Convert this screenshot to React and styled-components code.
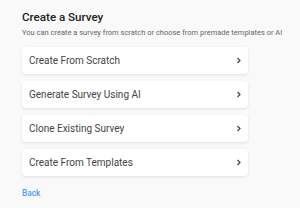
import React from "react";
import styled, { createGlobalStyle } from "styled-components";

const Global = createGlobalStyle`
  html, body { margin: 0; padding: 0; background: #f9f9f9; }
  body { font-family: Roboto, "Noto Sans", sans-serif; }
`;

const Page = styled.div`
  width: 300px;
  height: 208px;
  box-sizing: border-box;
  padding: 9px 52px 0 22px;
  background: #f9f9f9;
  display: flex;
  flex-direction: column;
`;

const Title = styled.h1`
  margin: 0;
  font-size: 11.6px;
  font-weight: 500;
  line-height: 16px;
  color: #222;
`;

const Subtitle = styled.p`
  margin: 3px 0 0;
  font-size: 7.5px;
  line-height: 10px;
  color: #666;
  white-space: nowrap;
`;

const List = styled.div`
  margin-top: 9px;
  display: flex;
  flex-direction: column;
  gap: 7px;
`;

const Card = styled.button`
  all: unset;
  box-sizing: border-box;
  height: 27px;
  padding: 0 6px 0 7px;
  background: #fff;
  border-radius: 4px;
  box-shadow: 0 1px 3px rgba(0, 0, 0, 0.1);
  display: flex;
  align-items: center;
  justify-content: space-between;
  font-family: Roboto, "Noto Sans", sans-serif;
  font-size: 10px;
  color: #444;
  cursor: pointer;
`;

const Chevron = () => (
  <svg width="6" height="7" viewBox="0 0 6 7">
    <path d="M1.5 1 L4 3.5 L1.5 6" fill="none" stroke="#444" strokeWidth="1.2" />
  </svg>
);

const Back = styled.a`
  margin-top: 12px;
  font-size: 8.3px;
  font-weight: 500;
  color: #4b9cf5;
  text-decoration: none;
`;

const items = [
  "Create From Scratch",
  "Generate Survey Using AI",
  "Clone Existing Survey",
  "Create From Templates",
];

export default function App() {
  return (
    <>
      <Global />
      <Page>
        <Title>Create a Survey</Title>
        <Subtitle>
          You can create a survey from scratch or choose from premade templates or AI
        </Subtitle>
        <List>
          {items.map((t) => (
            <Card key={t}>
              <span>{t}</span>
              <Chevron />
            </Card>
          ))}
        </List>
        <Back href="#">Back</Back>
      </Page>
    </>
  );
}
